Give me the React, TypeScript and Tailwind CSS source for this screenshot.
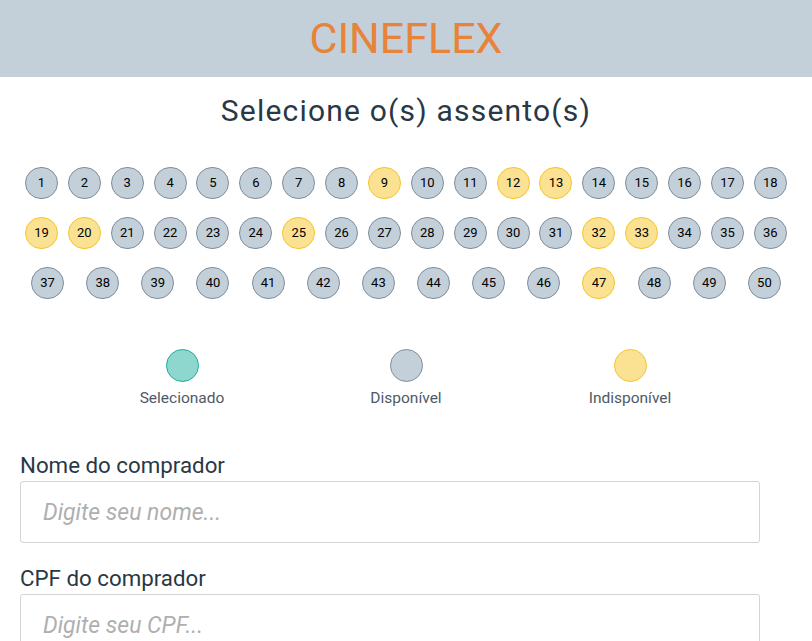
const unavailable = [9, 12, 13, 19, 20, 25, 32, 33, 47];

function Seat({ n }: { n: number }) {
  const taken = unavailable.includes(n);
  return (
    <div
      className={
        taken
          ? "w-[33px] h-[32px] mx-[4px] mb-[18px] rounded-full border border-[#F7C52B] bg-[#FBE192] flex items-center justify-center text-[13px] text-black"
          : "w-[33px] h-[32px] mx-[4px] mb-[18px] rounded-full border border-[#808F9D] bg-[#C3CFD9] flex items-center justify-center text-[13px] text-black"
      }
    >
      {n}
    </div>
  );
}

function Legend({ label, circle }: { label: string; circle: string }) {
  return (
    <div className="w-[224px] flex flex-col items-center">
      <div className={circle} />
      <span className="mt-[5px] text-[15.5px] text-[#4E5A65]">{label}</span>
    </div>
  );
}

function Field({ label, placeholder }: { label: string; placeholder: string }) {
  return (
    <div className="flex flex-col mb-[22px]">
      <label className="text-[22.3px] text-[#293845] leading-[26px] mb-[3px]">{label}</label>
      <input
        className="w-[740px] h-[62px] border border-[#D4D4D4] rounded-[3px] px-[22px] text-[23px] italic outline-none placeholder:text-[#AFAFAF] placeholder:italic"
        style={{ fontFamily: "Roboto, sans-serif" }}
        placeholder={placeholder}
      />
    </div>
  );
}

export default function App() {
  const seats = Array.from({ length: 50 }, (_, i) => i + 1);
  return (
    <div className="min-h-screen bg-white font-['Roboto',sans-serif]">
      <header className="h-[77px] bg-[#C3CFD9] flex items-center justify-center">
        <h1 className="text-[43px] text-[#E8833A] leading-none">CINEFLEX</h1>
      </header>
      <h2 className="mt-[17px] text-center text-[30px] tracking-[0.04em] text-[#293845] leading-[34px]">
        Selecione o(s) assento(s)
      </h2>
      <div className="mt-[39px] px-[20px] flex flex-wrap justify-around">
        {seats.map((n) => (
          <Seat key={n} n={n} />
        ))}
      </div>
      <div className="mt-[32px] flex justify-center">
        <Legend label="Selecionado" circle="w-[33px] h-[33px] rounded-full border border-[#1AAE9E] bg-[#8DD7CF]" />
        <Legend label="Disponível" circle="w-[33px] h-[33px] rounded-full border border-[#808F9D] bg-[#C3CFD9]" />
        <Legend label="Indisponível" circle="w-[33px] h-[33px] rounded-full border border-[#F7C52B] bg-[#FBE192]" />
      </div>
      <div className="mt-[42px] px-[20px]">
        <Field label="Nome do comprador" placeholder="Digite seu nome..." />
        <Field label="CPF do comprador" placeholder="Digite seu CPF..." />
      </div>
    </div>
  );
}
